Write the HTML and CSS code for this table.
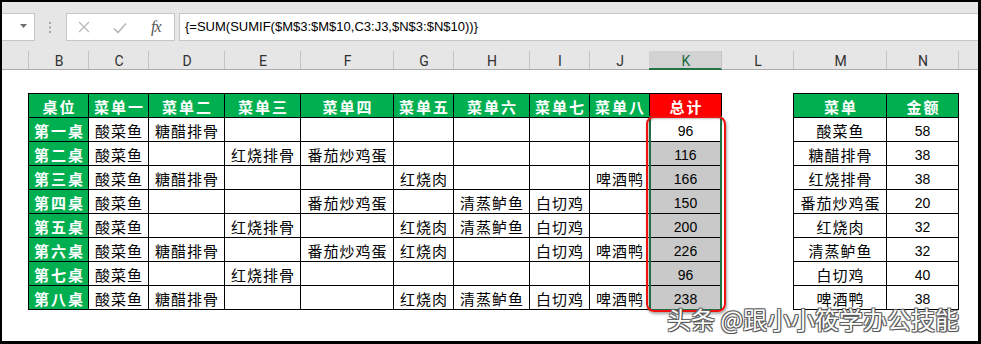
FILE: index.html
```html
<!DOCTYPE html>
<html lang="zh-CN">
<head>
<meta charset="utf-8">
<title>SUMIF</title>
<link rel="stylesheet" href="styles.css">
</head>
<body>
<div class="frame">
  <div class="toolbar">
    <div class="namebox"><svg width="7" height="4" viewBox="0 0 7 4"><path d="M0 0H7L3.5 4Z" fill="#6d6d6d"/></svg></div>
    <div class="dots"><svg width="2" height="11" viewBox="0 0 2 11"><rect x="0" y="0" width="2" height="2" fill="#a6a6a6"/><rect x="0" y="4.5" width="2" height="2" fill="#a6a6a6"/><rect x="0" y="9" width="2" height="2" fill="#a6a6a6"/></svg></div>
    <div class="fxbox">
      <span class="ic-x"><svg width="12" height="12" viewBox="0 0 12 12"><path d="M1 1L11 11M11 1L1 11" stroke="#b8b8b8" stroke-width="1.3" fill="none"/></svg></span>
      <span class="ic-ok"><svg width="14" height="12" viewBox="0 0 14 12"><path d="M1 6.5L5 10.5L13 1.5" stroke="#b8b8b8" stroke-width="1.6" fill="none"/></svg></span>
      <span class="ic-fx">fx</span>
    </div>
    <div class="formula">{=SUM(SUMIF($M$3:$M$10,C3:J3,$N$3:$N$10))}</div>
  </div>
  <div class="colheads">
    <div class="ch w27"></div>
    <div class="ch w60">B</div>
    <div class="ch w60">C</div>
    <div class="ch w76">D</div>
    <div class="ch w76">E</div>
    <div class="ch w93">F</div>
    <div class="ch w60">G</div>
    <div class="ch w76">H</div>
    <div class="ch w60">I</div>
    <div class="ch w60">J</div>
    <div class="ch w72 sel"><span>K</span></div>
    <div class="ch w72">L</div>
    <div class="ch w93">M</div>
    <div class="ch w72">N</div>
    <div class="ch rest"></div>
  </div>
  <div class="sheet">
    <div class="grid main">
      <div class="c h">桌位</div><div class="c h">菜单一</div><div class="c h">菜单二</div><div class="c h">菜单三</div><div class="c h">菜单四</div><div class="c h">菜单五</div><div class="c h">菜单六</div><div class="c h">菜单七</div><div class="c h">菜单八</div><div class="c h red">总计</div>

      <div class="c h">第一桌</div><div class="c">酸菜鱼</div><div class="c">糖醋排骨</div><div class="c"></div><div class="c"></div><div class="c"></div><div class="c"></div><div class="c"></div><div class="c"></div><div class="c n">96</div>

      <div class="c h">第二桌</div><div class="c">酸菜鱼</div><div class="c"></div><div class="c">红烧排骨</div><div class="c">番茄炒鸡蛋</div><div class="c"></div><div class="c"></div><div class="c"></div><div class="c"></div><div class="c n s">116</div>

      <div class="c h">第三桌</div><div class="c">酸菜鱼</div><div class="c">糖醋排骨</div><div class="c"></div><div class="c"></div><div class="c">红烧肉</div><div class="c"></div><div class="c"></div><div class="c">啤酒鸭</div><div class="c n s">166</div>

      <div class="c h">第四桌</div><div class="c">酸菜鱼</div><div class="c"></div><div class="c"></div><div class="c">番茄炒鸡蛋</div><div class="c"></div><div class="c">清蒸鲈鱼</div><div class="c">白切鸡</div><div class="c"></div><div class="c n s">150</div>

      <div class="c h">第五桌</div><div class="c">酸菜鱼</div><div class="c"></div><div class="c">红烧排骨</div><div class="c"></div><div class="c">红烧肉</div><div class="c">清蒸鲈鱼</div><div class="c">白切鸡</div><div class="c"></div><div class="c n s">200</div>

      <div class="c h">第六桌</div><div class="c">酸菜鱼</div><div class="c">糖醋排骨</div><div class="c"></div><div class="c">番茄炒鸡蛋</div><div class="c">红烧肉</div><div class="c"></div><div class="c">白切鸡</div><div class="c">啤酒鸭</div><div class="c n s">226</div>

      <div class="c h">第七桌</div><div class="c">酸菜鱼</div><div class="c"></div><div class="c">红烧排骨</div><div class="c"></div><div class="c"></div><div class="c"></div><div class="c"></div><div class="c"></div><div class="c n s">96</div>

      <div class="c h">第八桌</div><div class="c">酸菜鱼</div><div class="c">糖醋排骨</div><div class="c"></div><div class="c"></div><div class="c">红烧肉</div><div class="c">清蒸鲈鱼</div><div class="c">白切鸡</div><div class="c">啤酒鸭</div><div class="c n s">238</div>
    </div>
    <div class="grid side">
      <div class="c h">菜单</div><div class="c h">金额</div>
      <div class="c">酸菜鱼</div><div class="c n">58</div>
      <div class="c">糖醋排骨</div><div class="c n">38</div>
      <div class="c">红烧排骨</div><div class="c n">38</div>
      <div class="c">番茄炒鸡蛋</div><div class="c n">20</div>
      <div class="c">红烧肉</div><div class="c n">32</div>
      <div class="c">清蒸鲈鱼</div><div class="c n">32</div>
      <div class="c">白切鸡</div><div class="c n">40</div>
      <div class="c">啤酒鸭</div><div class="c n">38</div>
    </div>
    <div class="selbox"></div>
    <div class="callout"></div>
  </div>
  <div class="watermark">头条 @跟小小筱学办公技能</div>
</div>
</body>
</html>
```
FILE: styles.css
```css
* { box-sizing: border-box; margin: 0; padding: 0; }
html, body { background: #000; }
body { width: 981px; height: 344px; overflow: hidden; }

.frame {
  position: relative;
  margin: 2px 3px 0 2px;
  width: 976px;
  height: 339px;
  background: #fff;
  overflow: hidden;
}

/* formula bar */
.toolbar {
  height: 39px;
  background: #e6e6e6;
  display: flex;
  align-items: flex-start;
  padding-top: 11px;
}
.namebox {
  width: 33px;
  height: 28px;
  background: #fff;
  border: 1px solid #c6c6c6;
  border-left: 0;
  display: flex;
  align-items: center;
  justify-content: flex-end;
  padding-right: 7px;
  padding-bottom: 3px;
}
.namebox svg { display: block; }
.dots { margin-left: 14px; margin-top: 9px; width: 2px; height: 11px; }
.dots svg { display: block; }
.fxbox {
  margin-left: 15px;
  width: 109px;
  height: 28px;
  background: #fff;
  border: 1px solid #c6c6c6;
  display: flex;
  align-items: center;
}
.fxbox svg { display: block; }
.ic-x { margin-left: 11px; width: 12px; }
.ic-ok { margin-left: 23px; width: 14px; margin-top: 1px; }
.ic-fx {
  margin-left: 24px;
  font-family: "Liberation Serif", serif;
  font-style: italic;
  font-size: 16px;
  color: #555;
  letter-spacing: -1px;
  line-height: 16px;
  margin-top: -1px;
}
.formula {
  margin-left: 4px;
  flex: 1;
  height: 28px;
  background: #fff;
  border: 1px solid #c6c6c6;
  border-right: 0;
  padding-left: 5px;
  font-family: "Liberation Sans", Arial, sans-serif;
  font-size: 13px;
  line-height: 26px;
  color: #000;
}

/* column headers */
.colheads {
  display: flex;
  height: 29px;
  background: #e6e6e6;
  border-bottom: 1px solid #acacac;
}
.ch {
  position: relative;
  flex: none;
  text-align: center;
  font-family: Roboto, "Liberation Sans", sans-serif;
  font-size: 14px;
  line-height: 16px;
  padding-top: 12px;
  color: #303030;
}
.ch::after {
  content: "";
  position: absolute;
  right: 0;
  bottom: 0;
  width: 1px;
  height: 18px;
  background: #c4c4c4;
}
.ch.rest { flex: 1; }
.ch.rest::after { display: none; }
.w27 { width: 27px; }
.w60 { width: 60px; }
.w72 { width: 72px; }
.w76 { width: 76px; }
.w93 { width: 93px; }
.ch.sel::before {
  content: "";
  position: absolute;
  left: -1px;
  right: 0;
  top: 10px;
  bottom: -1px;
  background: #d2d2d2;
  border-bottom: 2px solid #217346;
}
.ch.sel span { position: relative; color: #1d6a40; }

/* sheet */
.sheet {
  position: relative;
  display: flex;
  align-items: flex-start;
  padding: 23px 0 0 26px;
}
.grid {
  display: grid;
  grid-auto-rows: 23px;
  gap: 1px;
  padding: 1px;
  background: #000;
}
.main { grid-template-columns: 59px 59px 75px 75px 92px 59px 75px 59px 59px 71px; }
.side { grid-template-columns: 92px 71px; margin-left: 71px; }

.c {
  background: #fff;
  display: flex;
  align-items: center;
  justify-content: center;
  padding-top: 3px;
  padding-left: 1px;
  font-family: "Noto Sans CJK SC", sans-serif;
  font-size: 15px;
  line-height: 16px;
  letter-spacing: 1px;
  color: #000;
  white-space: nowrap;
}
.c.h {
  background: #00b050;
  color: #fff;
  font-weight: 700;
  letter-spacing: 2px;
  padding-left: 2px;
}
.c.h.red { background: #ff0000; }
.c.n {
  font-family: "Liberation Sans", Arial, sans-serif;
  font-size: 14px;
  letter-spacing: 0;
  padding-left: 0;
}
.c.s { background: #c9c9c9; }

.selbox {
  position: absolute;
  left: 647px;
  top: 46px;
  width: 73px;
  height: 195px;
  border: 2px solid #217346;
  border-top-width: 1px;
}
.callout {
  position: absolute;
  left: 644px;
  top: 46px;
  width: 80px;
  height: 196px;
  border: 2px solid #f01010;
  border-radius: 8px;
  box-shadow: 1px 2px 3px rgba(0, 0, 0, 0.35), inset 1px 1px 2px rgba(0, 0, 0, 0.25);
}

.watermark {
  position: absolute;
  left: 665px;
  top: 305px;
  font-family: "Noto Sans CJK SC", sans-serif;
  font-size: 24px;
  line-height: 24px;
  white-space: nowrap;
  color: #fff;
  text-shadow: 1px 1px 0 #555, -1px -1px 0 #666, 1px -1px 0 #666, -1px 1px 0 #666, 0 0 2px #333;
}
```
